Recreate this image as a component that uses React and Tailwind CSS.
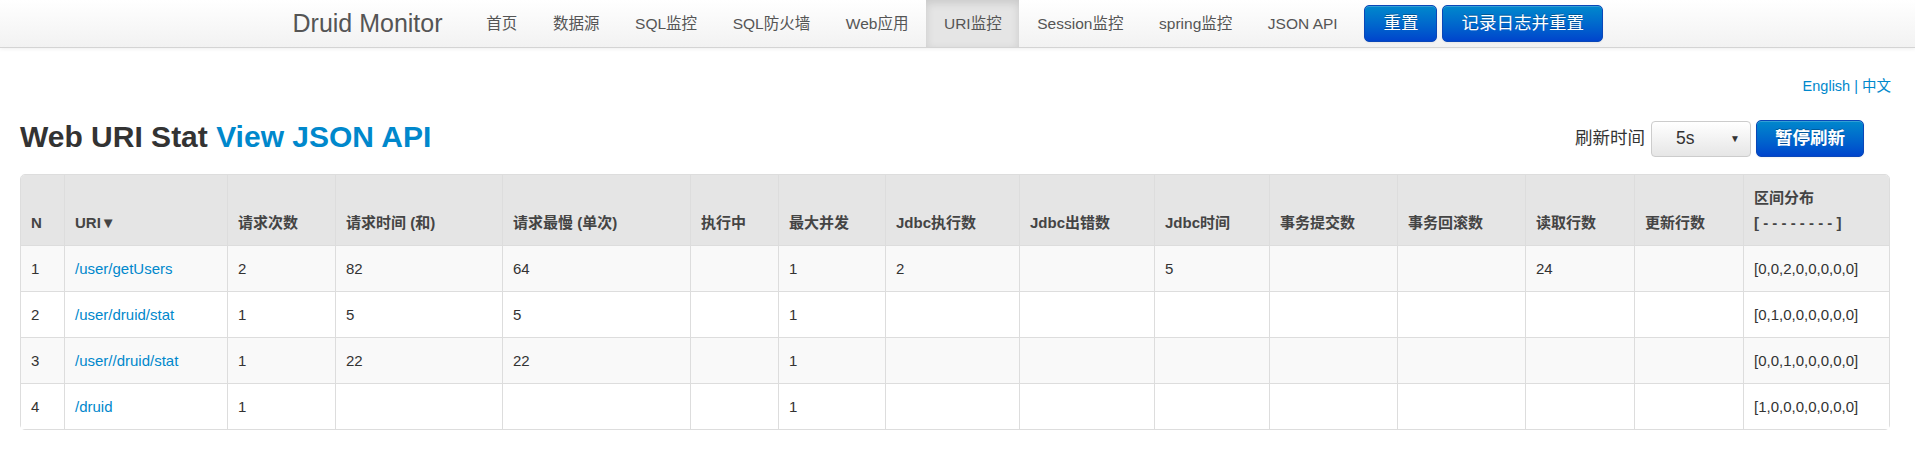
import React from 'react';

const navItems = ['首页', '数据源', 'SQL监控', 'SQL防火墙', 'Web应用', 'URI监控', 'Session监控', 'spring监控', 'JSON API'];

const columns = [
  { label: 'N', w: 43 },
  { label: 'URI▼', w: 163 },
  { label: '请求次数', w: 108 },
  { label: '请求时间 (和)', w: 167 },
  { label: '请求最慢 (单次)', w: 188 },
  { label: '执行中', w: 88 },
  { label: '最大并发', w: 107 },
  { label: 'Jdbc执行数', w: 134 },
  { label: 'Jdbc出错数', w: 135 },
  { label: 'Jdbc时间', w: 115 },
  { label: '事务提交数', w: 128 },
  { label: '事务回滚数', w: 128 },
  { label: '读取行数', w: 109 },
  { label: '更新行数', w: 109 },
  { label: 'hist', w: 146 },
];

const rows = [
  ['1', '/user/getUsers', '2', '82', '64', '', '1', '2', '', '5', '', '', '24', '', '[0,0,2,0,0,0,0,0]'],
  ['2', '/user/druid/stat', '1', '5', '5', '', '1', '', '', '', '', '', '', '', '[0,1,0,0,0,0,0,0]'],
  ['3', '/user//druid/stat', '1', '22', '22', '', '1', '', '', '', '', '', '', '', '[0,0,1,0,0,0,0,0]'],
  ['4', '/druid', '1', '', '', '', '1', '', '', '', '', '', '', '', '[1,0,0,0,0,0,0,0]'],
];

function clsxLite(...parts) {
  return parts.filter(Boolean).join(' ');
}

function BlueButton({ children, bold }) {
  return (
    <button
      className={clsxLite(
        'h-[37px] px-[18px] rounded-[5px] border border-[#0a47b8] bg-linear-to-b from-[#0088cc] to-[#0044cc] text-white text-[17.5px] leading-none shadow-[inset_0_1px_0_rgba(255,255,255,0.2),0_1px_2px_rgba(0,0,0,0.05)] [text-shadow:0_-1px_0_rgba(0,0,0,0.25)]',
        bold && 'font-bold'
      )}
    >
      {children}
    </button>
  );
}

export default function App() {
  return (
    <div className="min-h-[465px] bg-white text-[#333] font-['Liberation_Sans','Noto_Sans_CJK_SC',sans-serif]">
      <div className="h-[48px] bg-linear-to-b from-white to-[#f2f2f2] border-b border-[#d4d4d4] shadow-[0_1px_4px_rgba(0,0,0,0.065)]">
        <div className="w-[1330px] mx-auto h-full flex items-center">
          <span className="text-[25px] text-[#555] mr-[26px]">Druid Monitor</span>
          {navItems.map((item) => (
            <div
              key={item}
              className={clsxLite(
                'h-full flex items-center px-[17.8px] text-[15.5px] text-[#555]',
                item === 'URI监控' && 'bg-[#e5e5e5] shadow-[inset_0_3px_8px_rgba(0,0,0,0.125)]'
              )}
            >
              {item}
            </div>
          ))}
          <div className="ml-[9px] flex gap-[5px]">
            <BlueButton>重置</BlueButton>
            <BlueButton>记录日志并重置</BlueButton>
          </div>
        </div>
      </div>

      <div className="pl-[20px] pr-[26px]">
        <div className="mt-[28px] -mr-[2px] text-right text-[14.5px] leading-[20px] text-[#0088cc]">
          English | 中文
        </div>

        <div className="mt-[24px] flex items-center justify-between h-[37px]">
          <h3 className="text-[30px] leading-[33px] font-bold mb-[4px]">
            Web URI Stat <span className="text-[#0088cc]">View JSON API</span>
          </h3>
          <div className="flex items-center mr-[25px]">
            <span className="text-[17.5px] mr-[6px]">刷新时间</span>
            <div className="w-[100px] h-[36px] rounded-[4px] border border-[#ccc] bg-linear-to-b from-white to-[#e6e6e6] flex items-center pl-[24px] pr-[10px] text-[17.5px] mr-[5px]">
              <span className="flex-1">5s</span>
              <span className="text-[10px]">▼</span>
            </div>
            <BlueButton bold>暂停刷新</BlueButton>
          </div>
        </div>

        <table className="mt-[17px] table-fixed border-separate border-spacing-0 border border-[#ddd] rounded-[5px] w-[1868px] text-[15px] leading-[25px]">
          <colgroup>
            {columns.map((c, i) => (
              <col key={i} style={{ width: c.w }} />
            ))}
          </colgroup>
          <thead>
            <tr>
              {columns.map((c, i) => (
                <th
                  key={i}
                  className={clsxLite(
                    'bg-[#e5e5e5] text-[#444] font-bold text-left align-bottom px-[10px] py-[10px] whitespace-nowrap',
                    i > 0 && 'border-l border-[#ddd]',
                    i === 0 && 'rounded-tl-[4px]',
                    i === columns.length - 1 && 'rounded-tr-[4px]'
                  )}
                >
                  {c.label === 'hist' ? (
                    <>
                      区间分布
                      <br />[ - - - - - - - - ]
                    </>
                  ) : (
                    c.label
                  )}
                </th>
              ))}
            </tr>
          </thead>
          <tbody>
            {rows.map((r, ri) => (
              <tr key={ri} className={ri % 2 === 0 ? 'bg-[#f9f9f9]' : 'bg-white'}>
                {r.map((v, ci) => (
                  <td
                    key={ci}
                    className={clsxLite(
                      'align-top px-[10px] py-[10px] border-t border-[#ddd] whitespace-nowrap',
                      ci > 0 && 'border-l',
                      ci === 1 && 'text-[#0088cc]'
                    )}
                  >
                    {v}
                  </td>
                ))}
              </tr>
            ))}
          </tbody>
        </table>
      </div>
    </div>
  );
}
